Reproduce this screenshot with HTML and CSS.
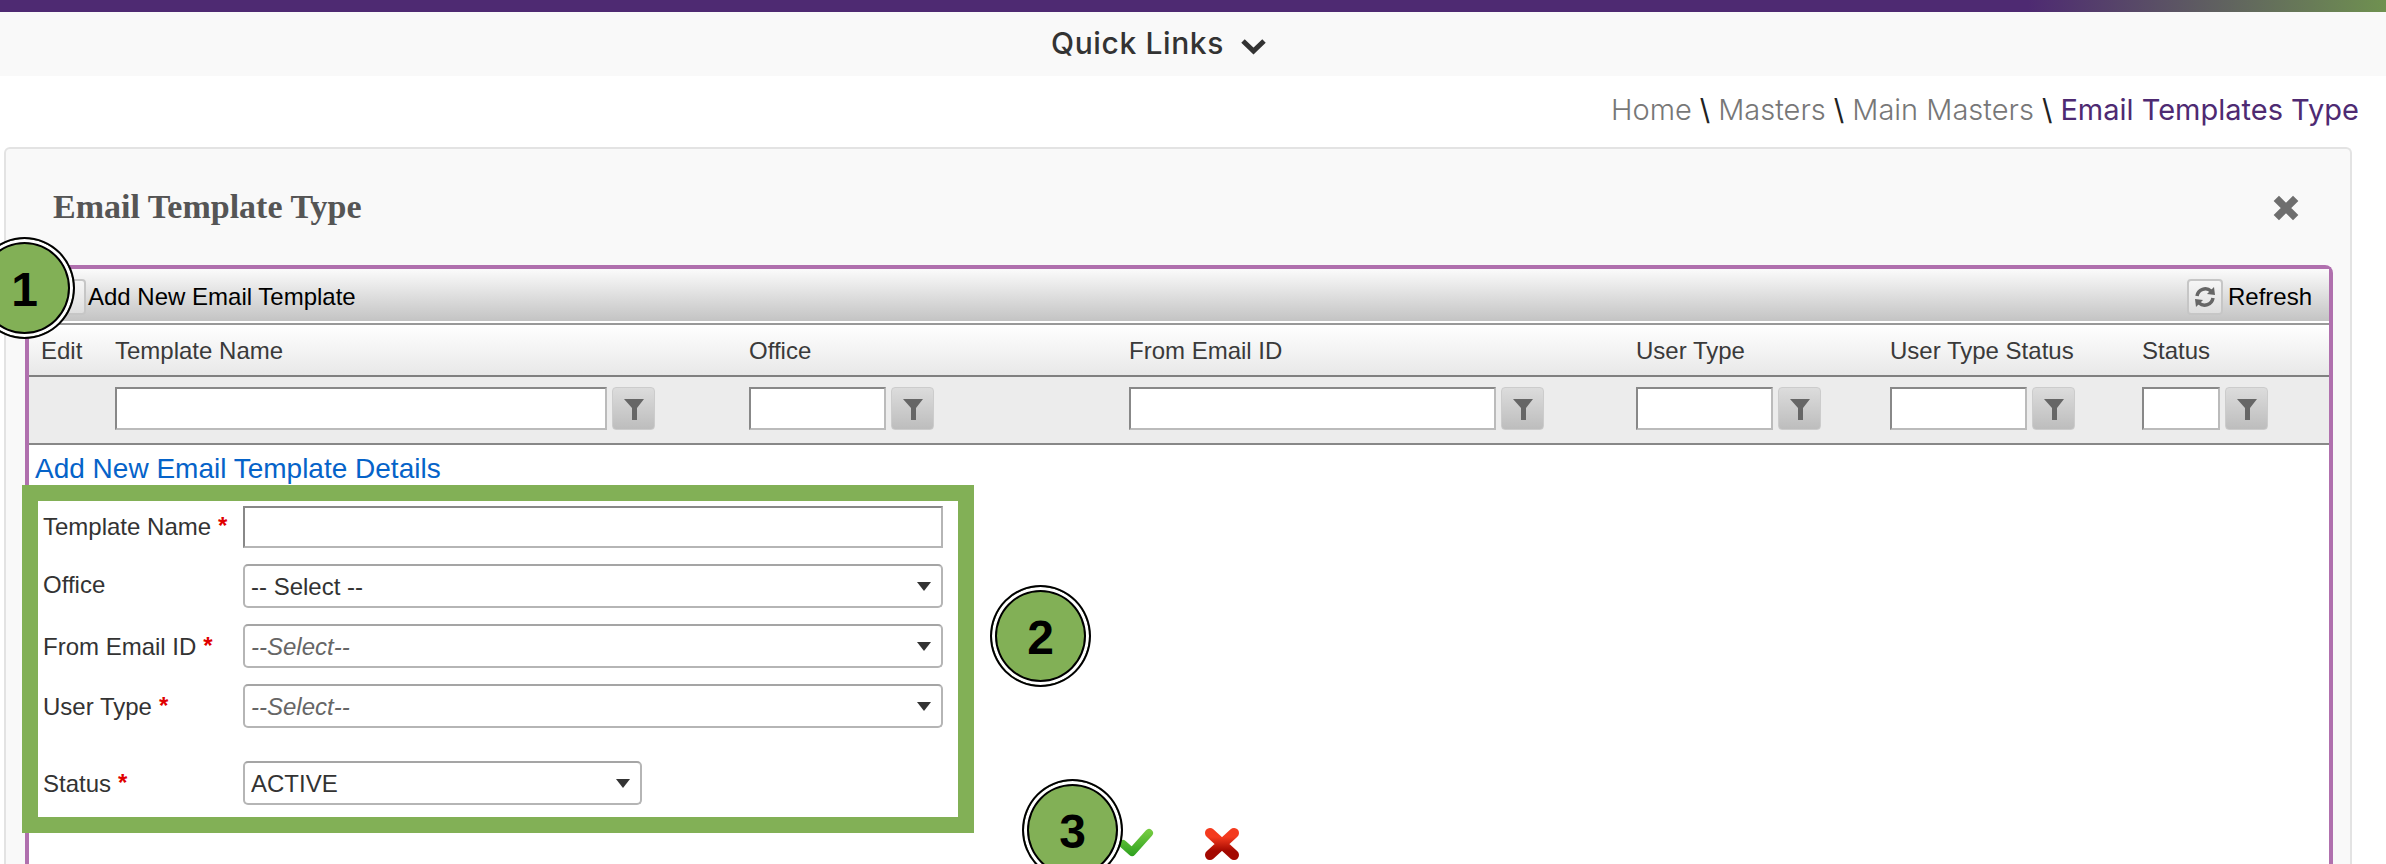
FILE: index.html
```html
<!DOCTYPE html>
<html lang="en">
<head>
<meta charset="utf-8">
<title>Email Template Type</title>
<link rel="stylesheet" href="styles.css">
</head>
<body>
<div class="topbar"></div>
<div class="quick-links">
  <span>Quick Links</span>
  <svg class="chevron" width="27" height="17" viewBox="0 0 27 17"><polyline points="3,3 13.5,13 24,3" fill="none" stroke="#333" stroke-width="5"/></svg>
</div>
<nav class="breadcrumb">
  <a>Home</a><i>\</i><a>Masters</a><i>\</i><a>Main Masters</a><i>\</i><b>Email Templates Type</b>
</nav>
<section class="panel">
  <header class="panel-head">
    <h1>Email Template Type</h1>
    <svg class="close" width="28" height="28" viewBox="0 0 26 26"><path d="M4 4 L22 22 M22 4 L4 22" stroke="#6e6e6e" stroke-width="7" fill="none"/></svg>
  </header>
  <div class="grid-box">
    <div class="toolbar">
      <div class="tool">
        <span class="tool-btn add-btn"></span>
        <span>Add New Email Template</span>
      </div>
      <div class="tool">
        <span class="tool-btn">
          <svg width="26" height="26" viewBox="0 0 26 26" fill="none" stroke="#666" stroke-width="3.5"><path d="M5 12 A8.5 8.5 0 0 1 19 7"/><path d="M21 14 A8.5 8.5 0 0 1 7 19"/><path d="M15 10 L23 11 L22 3 Z" fill="#666" stroke="none"/><path d="M11 16 L3 15 L4 23 Z" fill="#666" stroke="none"/></svg>
        </span>
        <span>Refresh</span>
      </div>
    </div>
    <div class="cols head-row">
      <span>Edit</span><span>Template Name</span><span>Office</span><span>From Email ID</span><span>User Type</span><span>User Type Status</span><span>Status</span>
    </div>
    <div class="cols filter-row">
      <span></span>
      <div class="filter"><input class="w-name" type="text"><button class="fbtn"><svg width="22" height="24" viewBox="0 0 22 24"><path d="M1 2 H21 L14 11 V23 H9 V11 Z" fill="#666"/></svg></button></div>
      <div class="filter"><input class="w-short" type="text"><button class="fbtn"><svg width="22" height="24" viewBox="0 0 22 24"><path d="M1 2 H21 L14 11 V23 H9 V11 Z" fill="#666"/></svg></button></div>
      <div class="filter"><input class="w-mail" type="text"><button class="fbtn"><svg width="22" height="24" viewBox="0 0 22 24"><path d="M1 2 H21 L14 11 V23 H9 V11 Z" fill="#666"/></svg></button></div>
      <div class="filter"><input class="w-short" type="text"><button class="fbtn"><svg width="22" height="24" viewBox="0 0 22 24"><path d="M1 2 H21 L14 11 V23 H9 V11 Z" fill="#666"/></svg></button></div>
      <div class="filter"><input class="w-short" type="text"><button class="fbtn"><svg width="22" height="24" viewBox="0 0 22 24"><path d="M1 2 H21 L14 11 V23 H9 V11 Z" fill="#666"/></svg></button></div>
      <div class="filter"><input class="w-tiny" type="text"><button class="fbtn"><svg width="22" height="24" viewBox="0 0 22 24"><path d="M1 2 H21 L14 11 V23 H9 V11 Z" fill="#666"/></svg></button></div>
    </div>
    <div class="body-area">
      <a class="details-link">Add New Email Template Details</a>
      <form class="form-frame">
        <div class="form-row">
          <label>Template Name <em>*</em></label>
          <input class="text-field" type="text">
        </div>
        <div class="form-row">
          <label class="raised">Office</label>
          <div class="select-wrap"><select><option>-- Select --</option></select></div>
        </div>
        <div class="form-row">
          <label>From Email ID <em>*</em></label>
          <div class="select-wrap"><select class="placeholder"><option>--Select--</option></select></div>
        </div>
        <div class="form-row">
          <label>User Type <em>*</em></label>
          <div class="select-wrap"><select class="placeholder"><option>--Select--</option></select></div>
        </div>
        <div class="form-row status-row">
          <label class="lowered">Status <em>*</em></label>
          <div class="select-wrap narrow"><select><option>ACTIVE</option></select></div>
        </div>
      </form>
      <div class="actions">
        <svg width="36" height="32" viewBox="0 0 36 32"><defs><linearGradient id="ok" gradientUnits="userSpaceOnUse" x1="0" y1="4" x2="0" y2="30"><stop offset="0" stop-color="#74cb40"/><stop offset="1" stop-color="#2b9f1e"/></linearGradient></defs><polyline points="5,17 14,25 31,6" fill="none" stroke="url(#ok)" stroke-width="8" stroke-linejoin="round" stroke-linecap="round"/></svg>
        <svg width="36" height="34" viewBox="0 0 36 34"><defs><linearGradient id="no" gradientUnits="userSpaceOnUse" x1="0" y1="10" x2="0" y2="24"><stop offset="0" stop-color="#f43a1e"/><stop offset="1" stop-color="#a30800"/></linearGradient></defs><path d="M6 6 L30 28 M30 6 L6 28" fill="none" stroke="url(#no)" stroke-width="10" stroke-linecap="round"/></svg>
      </div>
    </div>
  </div>
</section>
<span class="badge badge-1">1</span>
<span class="badge badge-2">2</span>
<span class="badge badge-3">3</span>
</body>
</html>
```
FILE: styles.css
```css
* { box-sizing: border-box; }
html, body { margin: 0; height: 864px; overflow: hidden; }
body { position: relative; background: #fff; font-family: "Liberation Sans", Arial, sans-serif; font-size: 24px; color: #333; }

.topbar { height: 12px; background: linear-gradient(90deg, #4e2a72 0, #4e2a72 85%, #6f9150 100%); }

.quick-links { height: 64px; background: #f9f9f9; display: flex; align-items: center; justify-content: center; gap: 16px; font-family: Inter, sans-serif; font-size: 30px; letter-spacing: 0.6px; font-weight: 500; color: #333; padding-right: 68px; }
.quick-links span { position: relative; top: -1px; }
.chevron { display: block; position: relative; top: 2px; }

.breadcrumb { height: 71px; display: flex; justify-content: flex-end; align-items: center; gap: 8px; padding: 0 27px 4px 0; font-family: Inter, sans-serif; font-size: 29px; font-weight: 300; color: #777; }
.breadcrumb i { font-style: normal; color: #222; font-weight: 400; }
.breadcrumb b { font-weight: 400; color: #4e2a72; }

.panel { margin: 0 34px 0 4px; height: 800px; background: #f9f9f9; border: 2px solid #e3e3e3; border-bottom: 0; border-radius: 6px 6px 0 0; padding: 0 17px 0 19px; }
.panel-head { height: 116px; display: flex; align-items: center; justify-content: space-between; padding: 0 33px 0 28px; }
.panel-head h1 { margin: 0; font-family: "Liberation Serif", serif; font-size: 34px; font-weight: 700; color: #555; position: relative; top: 0; }
.close { display: block; position: relative; top: 1px; }

.grid-box { height: 700px; background: #fff; border: 4px solid #b070ae; border-bottom: 0; border-radius: 8px 8px 0 0; }

.toolbar { height: 56px; display: flex; align-items: center; justify-content: space-between; padding: 0 17px 0 21px; background: linear-gradient(#fbfbfb, #c4c4c4 92%, #fff 92%, #fff 96%, #999 96%); color: #000; }
.tool { display: flex; align-items: center; gap: 5px; }
.tool:first-child { gap: 2px; }
.tool-btn { width: 36px; height: 36px; display: flex; align-items: center; justify-content: center; border: 2px solid #c6c6c6; border-radius: 4px; background: linear-gradient(#f6f6f6, #dedede); }
.add-btn { width: 36px; }

.cols { display: grid; grid-template-columns: 74px 634px 380px 507px 254px 252px 1fr; padding-left: 12px; }
.head-row { height: 52px; align-items: center; background: linear-gradient(#fff, #e8e8e8); border-bottom: 2px solid #808080; color: #3a3a3a; }
.head-row span { position: relative; top: 1px; }
.filter-row { height: 68px; align-items: center; background: #ececec; border-bottom: 2px solid #888; padding-bottom: 3px; }
.filter { display: flex; align-items: center; gap: 5px; }
.filter input { height: 43px; border: 2px solid; border-color: #888 #bbb #bbb #888; background: #fff; padding: 0; }
.w-name { width: 492px; }
.w-mail { width: 367px; }
.w-short { width: 137px; }
.w-tiny { width: 78px; }
.fbtn { width: 43px; height: 43px; padding: 0; display: flex; align-items: center; justify-content: center; border: 1px solid #ccc; border-radius: 4px; background: linear-gradient(#dcdcdc, #bdbdbd); }
.fbtn svg { display: block; }

.body-area { padding: 8px 0 0 0; position: relative; }
.details-link { display: block; margin-left: 6px; font-size: 28px; line-height: 32px; color: #0563c9; }

.form-frame { width: 952px; height: 348px; margin: 0 0 0 -7px; border: 16px solid #82b056; background: #fff; padding: 5px 15px 0 5px; }
.form-row { height: 60px; display: flex; align-items: flex-start; }
.form-row label { width: 200px; height: 43px; display: flex; align-items: center; gap: 7px; flex: none; position: relative; top: -1px; }
.form-row label.raised { top: -3px; }
.form-row label.lowered { top: 1px; }
.form-row label em { color: #e00000; font-style: normal; font-weight: 700; position: relative; top: -1px; }
.status-row { margin-top: 15px; }
.text-field { width: 700px; height: 42px; border: 2px solid; border-color: #888 #b5b5b5 #b5b5b5 #888; padding: 0; background: #fff; }
.select-wrap { width: 700px; height: 44px; margin-top: -2px; position: relative; }
.select-wrap.narrow { width: 399px; margin-top: 0; }
.select-wrap::after { content: ""; position: absolute; right: 12px; top: 18px; border-left: 7px solid transparent; border-right: 7px solid transparent; border-top: 9px solid #333; }
.select-wrap select { width: 100%; height: 100%; appearance: none; -webkit-appearance: none; border: 2px solid #b5b5b5; border-top-color: #a5a5a5; border-radius: 5px; background: #fff; padding: 0 0 0 6px; font: inherit; color: #333; }
.select-wrap select.placeholder { font-style: italic; color: #666; }

.actions { position: absolute; left: 1089px; top: 382px; display: flex; align-items: flex-start; gap: 50px; }
.actions svg { display: block; }

.badge { position: absolute; width: 101px; height: 102px; border-radius: 50%; background: #82b056; border: 2px solid #000; box-shadow: inset 0 0 0 3px #fff, inset 0 0 0 5px #000; display: flex; align-items: center; justify-content: center; padding-top: 2px; font-size: 48px; font-weight: 700; color: #000; }
.badge-1 { left: -26px; top: 237px; }
.badge-2 { left: 990px; top: 585px; }
.badge-3 { left: 1022px; top: 779px; }
```
